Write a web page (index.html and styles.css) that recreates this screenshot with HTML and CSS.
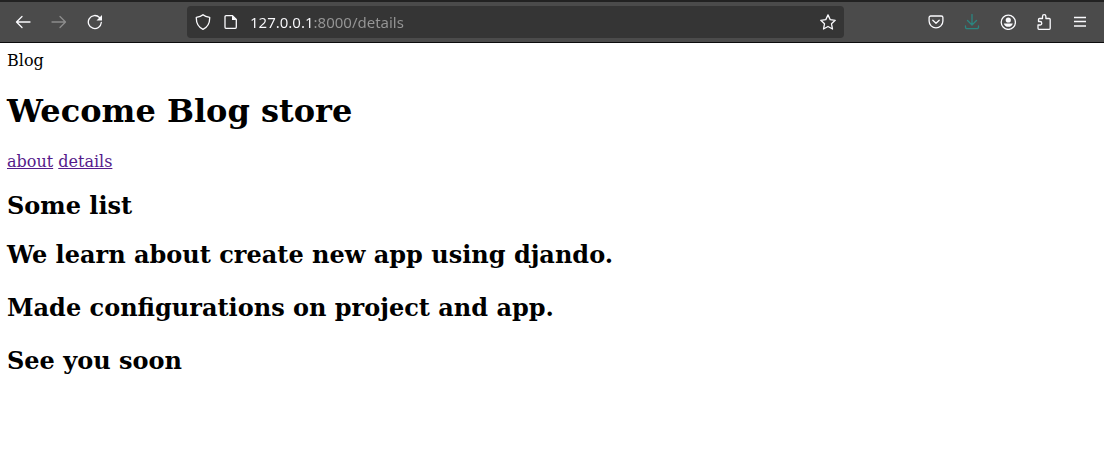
FILE: index.html
```html
<!DOCTYPE html>
<html lang="en">
<head>
<meta charset="utf-8">
<title>Blog</title>
<link rel="stylesheet" href="styles.css">
</head>
<body>
<header class="toolbar">
  <nav class="nav-buttons" aria-label="Navigation">
    <button class="icon-button" type="button" aria-label="Back"><svg class="icon" viewBox="0 0 16 16"><path d="M15 8H1.800M7 2.500 1.500 8 7 13.500"/></svg></button>
    <button class="icon-button" type="button" aria-label="Forward" disabled><svg class="icon" viewBox="0 0 16 16"><path d="M1 8h13.200M9 2.500 14.500 8 9 13.500"/></svg></button>
    <button class="icon-button" type="button" aria-label="Reload"><svg class="icon" viewBox="0 0 16 16"><path d="M14.300 8.500A6.500 6.500 0 1 1 12.500 3.500"/><path class="solid" d="M15 1v5.500H9.500Z"/></svg></button>
  </nav>
  <div class="address-bar">
    <button class="icon-button compact" type="button" aria-label="Site protection"><svg class="icon" viewBox="0 0 16 16"><path d="M8 .8C6.600 2.200 4 3.100 1.300 3.300C1.100 9 3.400 13.200 8 15.300C12.600 13.200 14.900 9 14.700 3.300C12 3.100 9.400 2.200 8 .8Z"/></svg></button>
    <button class="icon-button compact" type="button" aria-label="Site information"><svg class="icon" viewBox="0 0 16 16"><path d="M3 1.700h6.500l3.800 3.800v7.800a1 1 0 0 1-1 1H3a1 1 0 0 1-1-1V2.700a1 1 0 0 1 1-1Z"/><path class="solid" d="M9 1.500v4.600h4.600Z"/></svg></button>
    <input class="address" type="text" aria-label="Address" value="127.0.0.1:8000/details" spellcheck="false">
    <button class="icon-button compact" type="button" aria-label="Bookmark this page"><svg class="icon" viewBox="0 0 16 16"><path d="m8 .9 2.200 4.700 5 .7-3.700 3.500 1 5.200L8 12.500l-4.500 2.500 1-5.200L.8 6.300l5-.7Z"/></svg></button>
  </div>
  <div class="tools">
    <button class="icon-button" type="button" aria-label="Save to Pocket"><svg class="icon" viewBox="0 0 16 16"><path d="M2.700 2h10.600a1.600 1.600 0 0 1 1.600 1.600V7a6.900 6.900 0 0 1-13.800 0V3.600A1.600 1.600 0 0 1 2.700 2Z"/><path d="m4.800 6.300 3.200 3 3.200-3"/></svg></button>
    <button class="icon-button download" type="button" aria-label="Downloads"><svg class="icon" viewBox="0 0 16 16"><path d="M8 .5v10.200M3.500 6.500 8 11l4.500-4.500M1.500 12v1.200a1.500 1.500 0 0 0 1.500 1.500h10a1.500 1.500 0 0 0 1.500-1.500V12"/></svg></button>
    <button class="icon-button" type="button" aria-label="Account"><svg class="icon" viewBox="0 0 16 16"><circle cx="8.300" cy="8.300" r="7.100"/><circle class="solid" cx="8.300" cy="6" r="2.600"/><path class="solid" d="M3.800 9.500h9a4.700 4.700 0 0 1-9 0Z"/></svg></button>
    <button class="icon-button" type="button" aria-label="Extensions"><svg class="icon" viewBox="0 0 16 16"><path d="M2.500 7.500V5.500a1 1 0 0 1 1-1h3V2.400a1.700 1.700 0 0 1 3.400 0v2.100h3.300a1 1 0 0 1 1 1v8.800a1 1 0 0 1-1 1H3a1 1 0 0 1-1-1v-3.300h2a1.750 1.750 0 0 0 0-3.500Z"/></svg></button>
    <button class="icon-button" type="button" aria-label="Open menu"><svg class="icon menu-icon" viewBox="0 0 16 16"><path d="M2 3.500h12M2 7.500h12M2 12h12"/></svg></button>
  </div>
</header>
<main class="page">
  <div>Blog</div>
  <h1 class="title">Wecome Blog store</h1>
  <a class="link" href="#about">about</a>
  <a class="link" href="#details">details</a>
  <h2 class="heading">Some list</h2>
  <div class="lessons">
    <p class="lesson">We learn about create new app using djando.</p>
    <p class="lesson">Made configurations on project and app.</p>
    <p class="lesson">See you soon</p>
  </div>
</main>
</body>
</html>
```
FILE: styles.css
```css
* {
  box-sizing: border-box;
}

body {
  margin: 0;
  background: #fff;
  color: #000;
  font-family: "DejaVu Serif", serif;
  font-size: 16px;
}

.toolbar {
  display: grid;
  grid-template-columns: 187fr 657fr 260fr;
  align-items: center;
  padding: 4px 0;
  border-top: 2px solid #222;
  border-bottom: 1px solid #0c0c0d;
  background: #4b4b4b;
}

.nav-buttons {
  display: flex;
  padding-left: 5px;
}

.tools {
  display: flex;
  justify-content: flex-end;
  padding-right: 6px;
}

.icon-button {
  display: flex;
  flex: none;
  align-items: center;
  justify-content: center;
  width: 36px;
  height: 32px;
  padding: 0;
  border: 0;
  background: none;
  color: #fbfbfe;
}

.icon-button:disabled {
  color: #8c8c8c;
}

.compact {
  width: 28px;
}

.download {
  color: #2b8580;
}

.icon {
  width: 16px;
  height: 16px;
  fill: none;
  stroke: currentColor;
  stroke-width: 1.3;
  stroke-linecap: round;
  stroke-linejoin: round;
}

.menu-icon {
  stroke-linecap: butt;
}

.solid {
  fill: currentColor;
  stroke: none;
}

.address-bar {
  display: flex;
  align-items: center;
  padding: 0 2px;
  border-radius: 4px;
  background: #353535;
}

.address {
  flex: 1;
  min-width: 0;
  height: 32px;
  margin-left: 5px;
  padding: 0;
  border: 0;
  outline: 0;
  /* Bright host name, dimmed port and path */
  background: linear-gradient(90deg, #fbfbfe 64px, #969696 64px);
  -webkit-background-clip: text;
  background-clip: text;
  color: #fbfbfe;
  -webkit-text-fill-color: transparent;
  font-family: "Noto Sans", sans-serif;
  font-size: 15px;
}

.page {
  padding: 8px 7px;
}

.title {
  margin: 22px 0;
  font-size: 32px;
}

.link {
  color: #551a8b;
}

.heading {
  margin: 20px 0;
  font-size: 24px;
}

.lessons {
  display: grid;
  gap: 24px;
  font-size: 24px;
  font-weight: bold;
}

.lesson {
  margin: 0;
}
```
